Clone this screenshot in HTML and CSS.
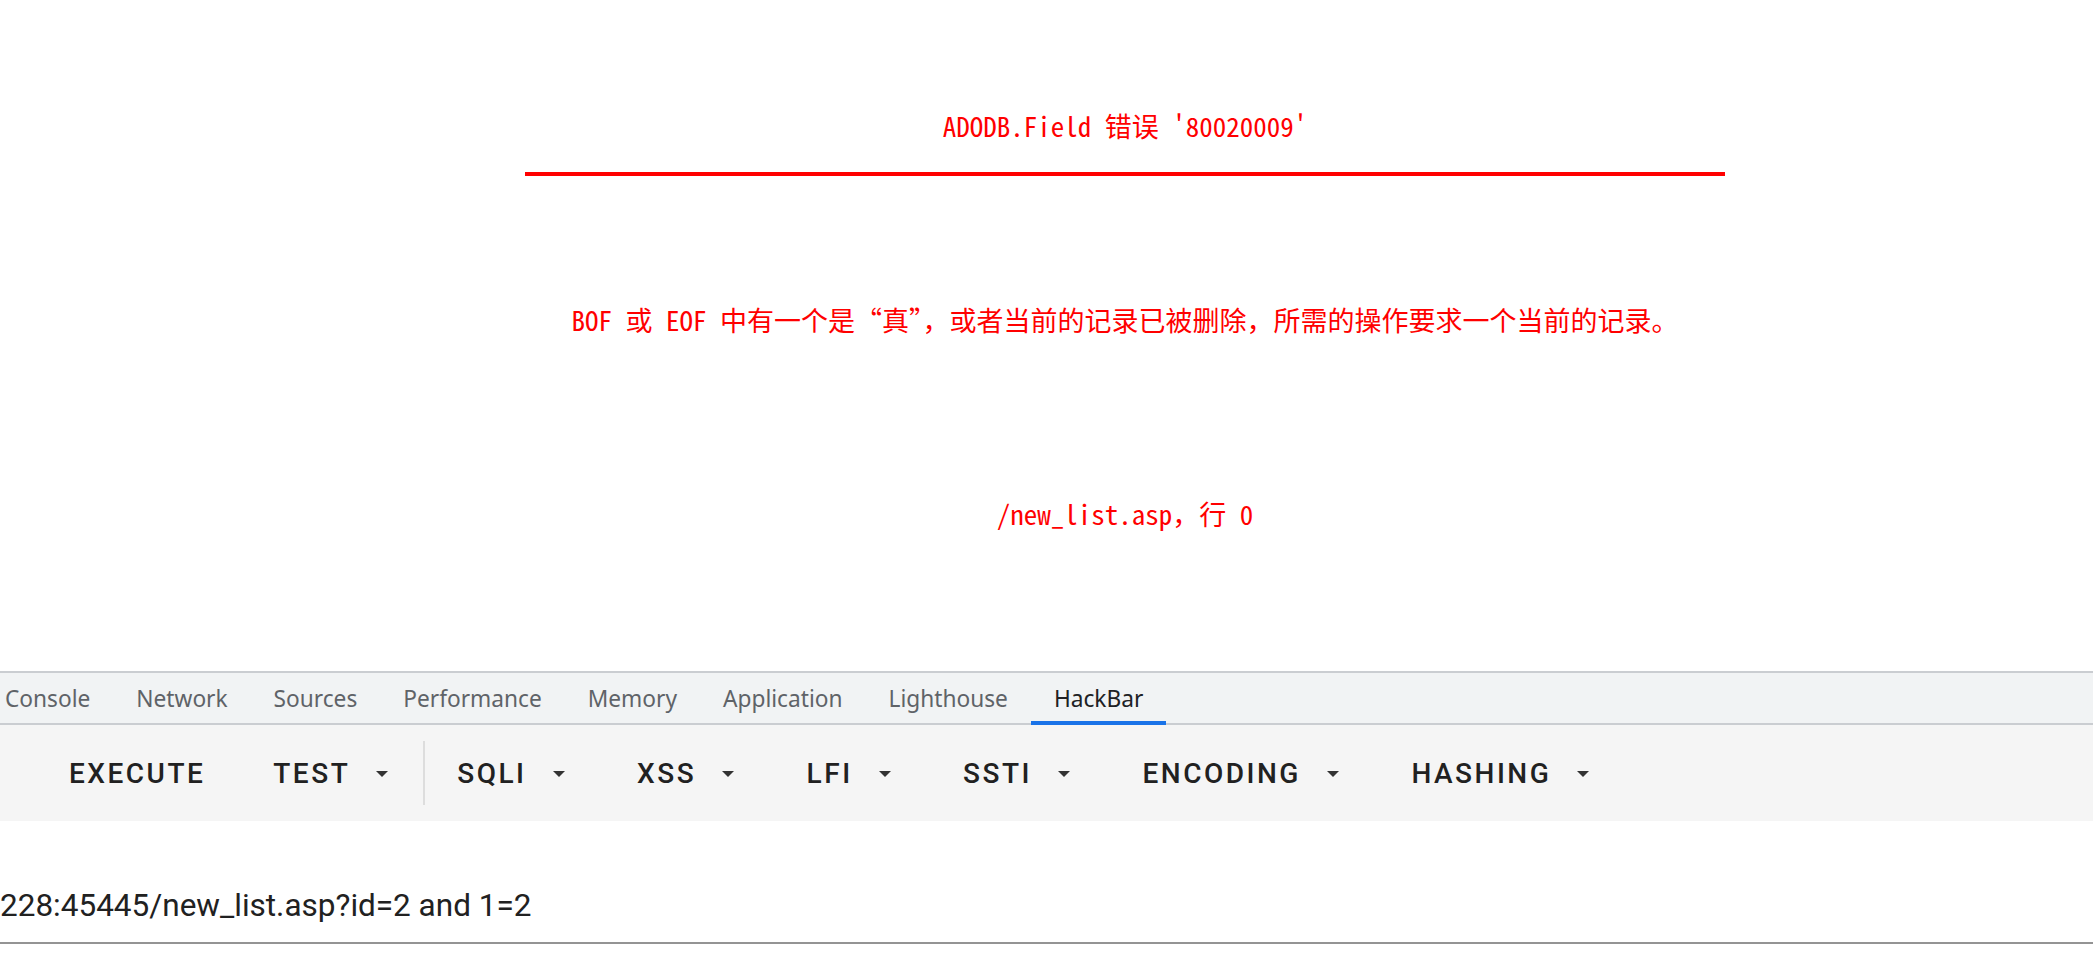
FILE: index.html
```html
<!DOCTYPE html>
<html lang="zh-CN">
<head>
<meta charset="utf-8">
<title>ADODB.Field 错误</title>
<link rel="stylesheet" href="styles.css">
</head>
<body>
<div class="page">
  <div class="box">
    <p class="line title">ADODB.Field 错误 '80020009'</p>
    <div class="rule"></div>
    <p class="line msg">BOF 或 EOF 中有一个是“真”，或者当前的记录已被删除，所需的操作要求一个当前的记录。</p>
    <p class="line loc">/new_list.asp，行 0</p>
  </div>
</div>
<div class="devtools">
  <div class="tabs">
    <div class="tab">Console</div>
    <div class="tab">Network</div>
    <div class="tab">Sources</div>
    <div class="tab">Performance</div>
    <div class="tab">Memory</div>
    <div class="tab">Application</div>
    <div class="tab">Lighthouse</div>
    <div class="tab active">HackBar</div>
  </div>
  <div class="toolbar">
    <div class="btn plain">EXECUTE</div>
    <div class="btn menu last">TEST<span class="caret"></span></div>
    <div class="sep"></div>
    <div class="btn menu first">SQLI<span class="caret"></span></div>
    <div class="btn menu">XSS<span class="caret"></span></div>
    <div class="btn menu">LFI<span class="caret"></span></div>
    <div class="btn menu">SSTI<span class="caret"></span></div>
    <div class="btn menu">ENCODING<span class="caret"></span></div>
    <div class="btn menu">HASHING<span class="caret"></span></div>
  </div>
  <div class="urlarea">
    <div class="urltext">228:45445/new_list.asp?id=2 and 1=2</div>
  </div>
</div>
</body>
</html>
```
FILE: styles.css
```css
html, body {
  margin: 0;
  padding: 0;
  background: #ffffff;
}
body {
  width: 2093px;
  height: 978px;
  overflow: hidden;
}
.page {
  height: 671px;
  overflow: hidden;
}
.box {
  margin-left: 525px;
  width: 1200px;
  padding-top: 106px;
}
.line {
  margin: 0;
  text-align: center;
  color: #ff0000;
  font-family: "Noto Sans Mono CJK SC", "Noto Sans CJK SC", "Liberation Mono", monospace;
  font-size: 27px;
  line-height: 40px;
  white-space: nowrap;
}
.rule {
  margin-top: 26px;
  height: 4px;
  background: #ff0000;
}
.msg {
  margin-top: 124px;
}
.loc {
  margin-top: 154px;
}
.devtools {
  height: 307px;
  font-family: Roboto, "Liberation Sans", sans-serif;
}
.tabs {
  display: flex;
  height: 50px;
  border-top: 2px solid #cacdd1;
  border-bottom: 2px solid #cacdd1;
  background: #f1f3f4;
}
.tab {
  display: flex;
  align-items: center;
  padding: 0 23px;
  padding-top: 1px;
  font-family: "Noto Sans", "Open Sans", sans-serif;
  font-size: 22.7px;
  color: #5f6368;
}
.tab:first-child {
  padding-left: 5px;
}
.tab.active {
  color: #202124;
  margin-bottom: -2px;
  border-bottom: 4px solid #1a73e8;
  padding-top: 3px;
}
.toolbar {
  display: flex;
  align-items: center;
  height: 96px;
  padding-left: 35px;
  background: #f5f5f5;
}
.btn {
  display: flex;
  align-items: center;
  padding: 1px 38.5px 0 34px;
  font-size: 28px;
  font-weight: 500;
  letter-spacing: 2.5px;
  color: #212121;
}
.btn.plain {
  padding-right: 34px;
}
.btn.last {
  padding-right: 35px;
}
.btn.first {
  padding-left: 32px;
}
.caret {
  width: 0;
  height: 0;
  margin-left: 26px;
  border-left: 6px solid transparent;
  border-right: 6px solid transparent;
  border-top: 6px solid #333333;
}
.sep {
  width: 2px;
  height: 64px;
  background: #dddddd;
}
.urlarea {
  padding-top: 66px;
  background: #ffffff;
}
.urltext {
  font-size: 31.5px;
  line-height: 38px;
  color: #212121;
  padding-bottom: 17px;
  border-bottom: 2px solid #949494;
  white-space: nowrap;
  overflow: hidden;
}
```
